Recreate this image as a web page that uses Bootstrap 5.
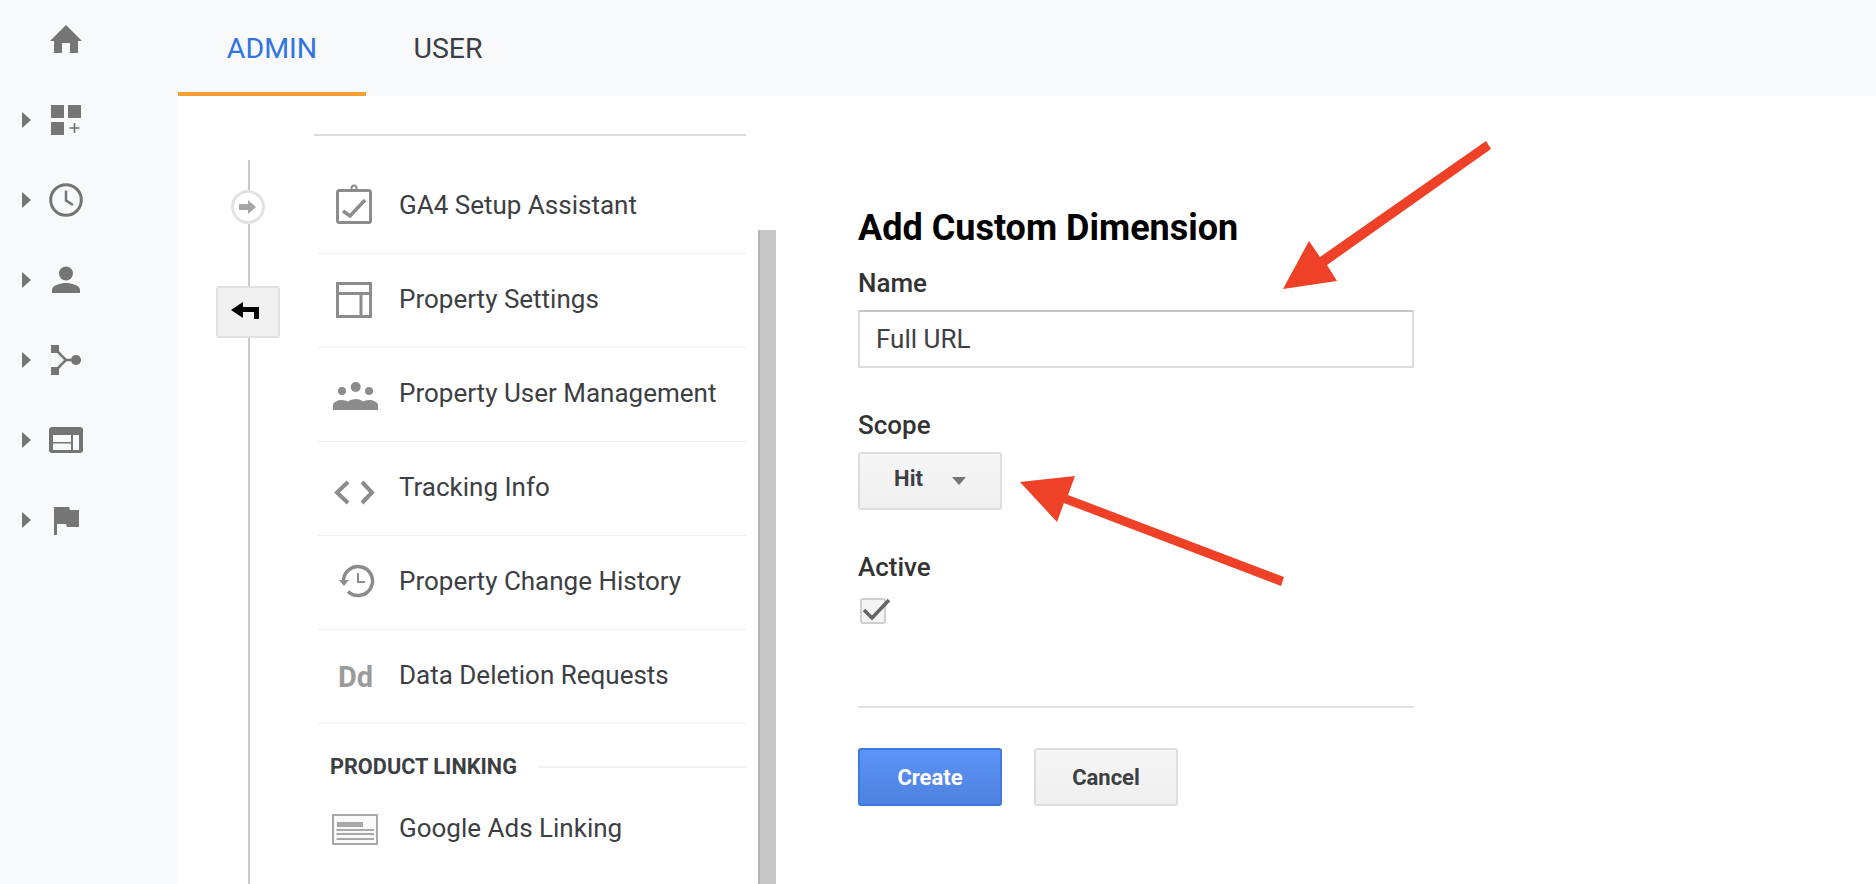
<!DOCTYPE html>
<html lang="en">
<head>
    <meta charset="UTF-8">
    <meta name="viewport" content="width=device-width, initial-scale=1">
    <title>Add Custom Dimension</title>
    <link rel="stylesheet" href="https://cdn.jsdelivr.net/npm/bootstrap@5.3.0/dist/css/bootstrap.min.css">
    <style>
        html, body { height: 884px; overflow: hidden; }
        body { font-family: Roboto, "Liberation Sans", sans-serif; color: #3c4043; background: #fff; position: relative; }

        /* left icon strip */
        .ga-side { width: 178px; height: 884px; background: #f8f9fb; flex: none; }
        .ga-side-row { height: 80px; padding-left: 22px; }
        .ga-caret { width: 0; height: 0; border-left: 9px solid #757575; border-top: 8.5px solid transparent; border-bottom: 8.5px solid transparent; margin-right: 15px; }
        .ga-caret-none { visibility: hidden; }

        /* tabs */
        .ga-tabs { height: 96px; background: #f8f9fb; }
        .ga-tab { font-size: 28.5px; line-height: 97px; height: 96px; color: #3c4043; text-decoration: none; text-align: center; }
        .ga-tab-on { width: 188px; color: #2f74e2; border-bottom: 4px solid #f29f38; }
        .ga-tab-off { width: 164px; }

        /* timeline rail */
        .ga-rail { width: 142px; padding-top: 64px; height: 788px; flex: none; }
        .ga-rail-line { width: 2px; background: #c9c9c9; }
        .ga-rail-a { height: 30px; }
        .ga-rail-b { height: 62px; }
        .ga-rail-c { flex-grow: 1; }
        .ga-rail-dot { width: 34px; height: 34px; border: 3px solid #e2e2e2; border-radius: 50%; margin-right: 3px; }
        .ga-back { width: 64px; height: 52px; padding: 0; margin-right: 3px; background: #f1f1f1; border: 2px solid #e0e0e0; border-radius: 3px; }
        .ga-back svg { margin-right: 6px; margin-bottom: 4px; }

        /* property menu */
        .ga-menu { width: 428px; flex: none; padding-top: 38px; margin-left: -2px; }
        .ga-menu-top { height: 2px; background: #dcdcdc; margin-left: -4px; margin-bottom: 24px; }
        .ga-item { height: 94px; padding: 0 0 2px; font-size: 26px; color: #3c4043; border-color: #f1f1f1; border-width: 0 0 2px; }
        .ga-item svg { width: 76px; height: 44px; flex: none; margin: 0 -1px 0 6px; }
        .ga-section { height: 58px; padding: 27px 0 0 12px; font-size: 21.7px; font-weight: 700; line-height: 30px; white-space: nowrap; }
        .ga-section-line { height: 2px; background: #f1f1f1; flex-grow: 1; margin-left: 20px; }
        .ga-scroll { width: 18px; margin: 134px 0 0 12px; background: #c8c8c8; border-left: 2px solid #b4b4b4; flex: none; }

        /* form */
        .ga-form { width: 556px; margin-left: 82px; padding-top: 112px; flex: none; }
        .ga-title { font-size: 36px; font-weight: 700; line-height: 40px; color: #000; margin: 0 0 21px; }
        .ga-label { font-size: 26px; font-weight: 500; line-height: 28px; color: #333; margin: 0 0 13px; display: block; }
        .ga-input { height: 58px; font-size: 26px; color: #3c4043; padding: 0 16px; border: 2px solid #dcdcdc; border-top-color: #c4c4c4; border-radius: 0; margin-bottom: 43px; }
        .ga-btn { width: 144px; height: 58px; padding: 0; font-size: 22px; font-weight: 700; border-radius: 3px; }
        .ga-btn-grey { color: #3c4043; background: linear-gradient(#f6f6f6, #efefef); border: 2px solid #dedede; }
        .ga-btn-blue { color: #fff; background: linear-gradient(#5b93f6, #4f82e0); border: 2px solid #3f78e0; }
        .ga-select { margin-bottom: 43px; padding-bottom: 5px; display: block; }
        .ga-select svg { margin-left: 29px; margin-bottom: -1px; vertical-align: middle; }
        .ga-check-wrap { margin-top: 17px; height: 26px; }
        .ga-rule { height: 2px; margin: 82px 0 40px; background: #e0e0e0; border: 0; opacity: 1; }
        .ga-arrows { position: absolute; left: 0; top: 0; width: 1876px; height: 884px; pointer-events: none; }
    </style>
</head>
<body>
<div class="d-flex">
    <aside class="ga-side">
        <div class="ga-side-row d-flex align-items-center">
            <span class="ga-caret ga-caret-none"></span>
            <svg width="40" height="40" viewBox="0 0 40 40" fill="#757575"><path d="M20 5L36 21H32V33H24V23H16V33H8V21H4Z"/></svg>
        </div>
        <div class="ga-side-row d-flex align-items-center">
            <span class="ga-caret"></span>
            <svg width="40" height="40" viewBox="0 0 40 40" fill="#757575"><path d="M5 5H18V18H5ZM22 5H35V18H22ZM5 22H18V35H5Z"/><path d="M28.5 23V33M23.500 28H33.500" stroke="#757575" stroke-width="1.700" fill="none"/></svg>
        </div>
        <div class="ga-side-row d-flex align-items-center">
            <span class="ga-caret"></span>
            <svg width="40" height="40" viewBox="0 0 40 40" fill="none" stroke="#757575"><circle cx="20" cy="20" r="15.300" stroke-width="3"/><path d="M20 10.500V20.500L27 25" stroke-width="2.500"/></svg>
        </div>
        <div class="ga-side-row d-flex align-items-center">
            <span class="ga-caret"></span>
            <svg width="40" height="40" viewBox="0 0 40 40" fill="#757575"><circle cx="20" cy="13.500" r="7"/><path d="M6 33V30C6 25 15 23 20 23S34 25 34 30V33Z"/></svg>
        </div>
        <div class="ga-side-row d-flex align-items-center">
            <span class="ga-caret"></span>
            <svg width="40" height="40" viewBox="0 0 40 40" fill="#757575"><path d="M5 5H13V13H5ZM5 27H13V35H5Z"/><circle cx="30" cy="20" r="5"/><path d="M10 10L20 20L10 30M20 20H28" fill="none" stroke="#757575" stroke-width="2.500"/></svg>
        </div>
        <div class="ga-side-row d-flex align-items-center">
            <span class="ga-caret"></span>
            <svg width="40" height="40" viewBox="0 0 40 40"><rect x="3" y="7" width="34" height="26" rx="3" fill="#757575"/><path d="M7 15H25V22H7ZM7 23.500H25V30H7ZM27 15H33V30H27Z" fill="#f8f9fb"/></svg>
        </div>
        <div class="ga-side-row d-flex align-items-center">
            <span class="ga-caret"></span>
            <svg width="40" height="40" viewBox="0 0 40 40" fill="#757575"><path d="M8 7H23L24 10H33V27H21L20 24H11V35H8Z"/></svg>
        </div>
    </aside>

    <main class="flex-grow-1">
        <nav class="ga-tabs d-flex">
            <a class="ga-tab ga-tab-on" href="#">ADMIN</a>
            <a class="ga-tab ga-tab-off" href="#">USER</a>
        </nav>
        <div class="d-flex">
            <div class="ga-rail d-flex flex-column align-items-center">
                <div class="ga-rail-line ga-rail-a"></div>
                <div class="ga-rail-dot d-flex align-items-center justify-content-center">
                    <svg width="18" height="14" viewBox="0 0 18 14" fill="#a6a6a6"><path d="M0 4H9V0L17 7L9 14V10H0Z"/></svg>
                </div>
                <div class="ga-rail-line ga-rail-b"></div>
                <button class="ga-back btn d-flex align-items-center justify-content-center" type="button" aria-label="Back">
                    <svg width="28" height="17" viewBox="0 0 28 17"><path d="M0 8L12 0V5H28V17H23V10H12V16Z" fill="#000"/></svg>
                </button>
                <div class="ga-rail-line ga-rail-c"></div>
            </div>

            <div class="ga-menu">
                <div class="ga-menu-top"></div>
                <div class="list-group list-group-flush">
                    <div class="list-group-item ga-item d-flex align-items-center">
                        <svg viewBox="0 0 76 44" fill="none" stroke="#8c8c8c"><rect x="13.500" y="6.500" width="33" height="32" rx="2" stroke-width="3"/><circle cx="30" cy="4" r="2.500" stroke-width="2"/><path d="M19 27L26 32L41 16" stroke-width="3.500"/></svg>
                        GA4 Setup Assistant
                    </div>
                    <div class="list-group-item ga-item d-flex align-items-center">
                        <svg viewBox="0 0 76 44" fill="none" stroke="#8c8c8c" stroke-width="3"><rect x="13.500" y="5.500" width="33" height="33"/><path d="M13.500 15.500H46.500M37 15.500V38.500"/></svg>
                        Property Settings
                    </div>
                    <div class="list-group-item ga-item d-flex align-items-center">
                        <svg viewBox="0 0 76 44" fill="#8c8c8c"><circle cx="31.700" cy="15" r="5"/><circle cx="18" cy="19" r="4"/><circle cx="45" cy="19" r="4"/><path d="M9 38V33C9 30 14 28 18 28C20 28 22 28.500 24 29.500C26 28 29 27 32 27C35 27 37 28 39 29.500C41 28.500 43 28 45 28C49 28 54 30 54 33V38Z"/></svg>
                        Property User Management
                    </div>
                    <div class="list-group-item ga-item d-flex align-items-center">
                        <svg viewBox="0 0 76 44" fill="none" stroke="#8c8c8c" stroke-width="4"><path d="M24 16L13 26.500L24 37M38 16L48 26.500L38 37"/></svg>
                        Tracking Info
                    </div>
                    <div class="list-group-item ga-item d-flex align-items-center">
                        <svg viewBox="0 0 76 44" fill="none" stroke="#8c8c8c"><path d="M19.500 21A14.500 14.500 0 1 1 24 31.500" stroke-width="3.500"/><path d="M15 20H25L20 26Z" fill="#8c8c8c" stroke="none"/><path d="M34 13V22H41" stroke-width="2"/></svg>
                        Property Change History
                    </div>
                    <div class="list-group-item ga-item d-flex align-items-center">
                        <svg viewBox="0 0 76 44"><text x="14" y="33" font-family="Roboto, sans-serif" font-size="29" font-weight="700" fill="#9b9b9b">Dd</text></svg>
                        Data Deletion Requests
                    </div>
                    <div class="ga-section d-flex align-items-center">
                        PRODUCT LINKING
                        <span class="ga-section-line"></span>
                    </div>
                    <div class="list-group-item ga-item d-flex align-items-center">
                        <svg viewBox="0 0 76 44" fill="none" stroke="#a8a8a8" stroke-width="2"><rect x="9" y="9" width="44" height="29" fill="#fafafa"/><path d="M13 18.500H39" stroke-width="5"/><path d="M12.500 24H50M12.500 28H50M12.500 33H50"/></svg>
                        Google Ads Linking
                    </div>
                </div>
            </div>

            <div class="ga-scroll"></div>

            <form class="ga-form">
                <h1 class="ga-title">Add Custom Dimension</h1>
                <label class="ga-label" for="dimName">Name</label>
                <input id="dimName" class="form-control ga-input" type="text" value="Full URL">
                <label class="ga-label">Scope</label>
                <button class="btn ga-btn ga-btn-grey ga-select" type="button">Hit<svg width="14" height="8" viewBox="0 0 14 8" fill="#757575"><path d="M0 0H14L7 8Z"/></svg></button>
                <label class="ga-label mb-0">Active</label>
                <div class="ga-check-wrap">
                    <svg width="34" height="28" viewBox="0 0 34 28" fill="none"><rect x="3" y="1" width="24" height="24" rx="2" fill="#f4f4f4" stroke="#cfcfcf" stroke-width="2"/><path d="M6 12L14 20L31 2" stroke="#666" stroke-width="3.500"/></svg>
                </div>
                <hr class="ga-rule">
                <div class="d-flex">
                    <button class="btn ga-btn ga-btn-blue me-2" type="button">Create</button>
                    <button class="btn ga-btn ga-btn-grey ms-4" type="button">Cancel</button>
                </div>
            </form>
        </div>
    </main>
</div>

<!-- red annotation arrows on top of the page -->
<svg class="ga-arrows" viewBox="0 0 1876 884" fill="#ee4127">
    <path d="M1486 141L1491 149L1327 265L1337 281L1283 289L1309 241L1320 257Z"/>
    <path d="M1284 577L1281 586L1064 503L1057 522L1020 482L1075 476L1068 495Z"/>
</svg>
</body>
</html>
